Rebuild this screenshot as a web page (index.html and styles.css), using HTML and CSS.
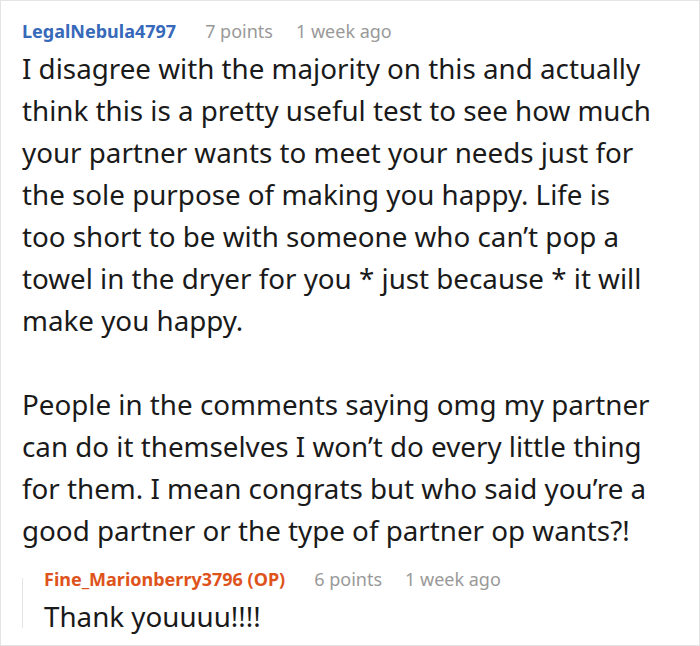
FILE: index.html
```html
<!DOCTYPE html>
<html>
<head>
<meta charset="utf-8">
<link rel="stylesheet" href="styles.css">
</head>
<body>
<div class="comment">
  <div class="meta">
    <span class="author">LegalNebula4797</span>
    <span class="points">7 points</span>
    <span class="time">1 week ago</span>
  </div>
  <div class="text">
    <p>I disagree with the majority on this and actually think this is a pretty useful test to see how much your partner wants to meet your needs just for the sole purpose of making you happy. Life is too&nbsp;short to be with someone who can’t pop a towel in the dryer for you * just because * it will make you happy.</p>
    <p>People in the comments saying omg my partner can do it themselves I won’t do every little thing for them. I mean congrats but who said you’re a good partner or the type of partner op wants?!</p>
  </div>
  <div class="reply">
    <div class="reply-line"></div>
    <div class="reply-body">
      <div class="meta">
        <span class="author op">Fine_Marionberry3796 (OP)</span>
        <span class="points">6 points</span>
        <span class="time">1 week ago</span>
      </div>
      <div class="text"><p>Thank youuuu!!!!</p></div>
    </div>
  </div>
</div>
</body>
</html>
```

FILE: styles.css
```css
html, body {
  margin: 0;
  padding: 0;
  background: #fff;
}
body {
  font-family: "Noto Sans", "Open Sans", sans-serif;
  width: 700px;
  height: 646px;
  overflow: hidden;
}
.comment {
  box-sizing: border-box;
  width: 700px;
  height: 646px;
  border: 1px solid #e4e4e4;
  padding: 14px 17px 0 21px;
}
.meta {
  display: flex;
  font-size: 18px;
  line-height: 32px;
  color: #999;
}
.author {
  font-weight: 700;
  color: #3769ba;
}
.author.op {
  color: #de531c;
}
.points {
  margin-left: 29px;
}
.time {
  margin-left: 23px;
}
.text {
  font-size: 27.75px;
  line-height: 42px;
  color: #1a1a1a;
}
.text p {
  margin: 0 0 42px;
}
.text p:last-child {
  margin-bottom: 0;
}
.reply {
  display: flex;
  margin-top: 12px;
}
.reply-line {
  width: 1px;
  background: #e4e4e4;
  margin: 15px 0 9px;
}
.reply-body {
  padding-left: 21px;
}
```
